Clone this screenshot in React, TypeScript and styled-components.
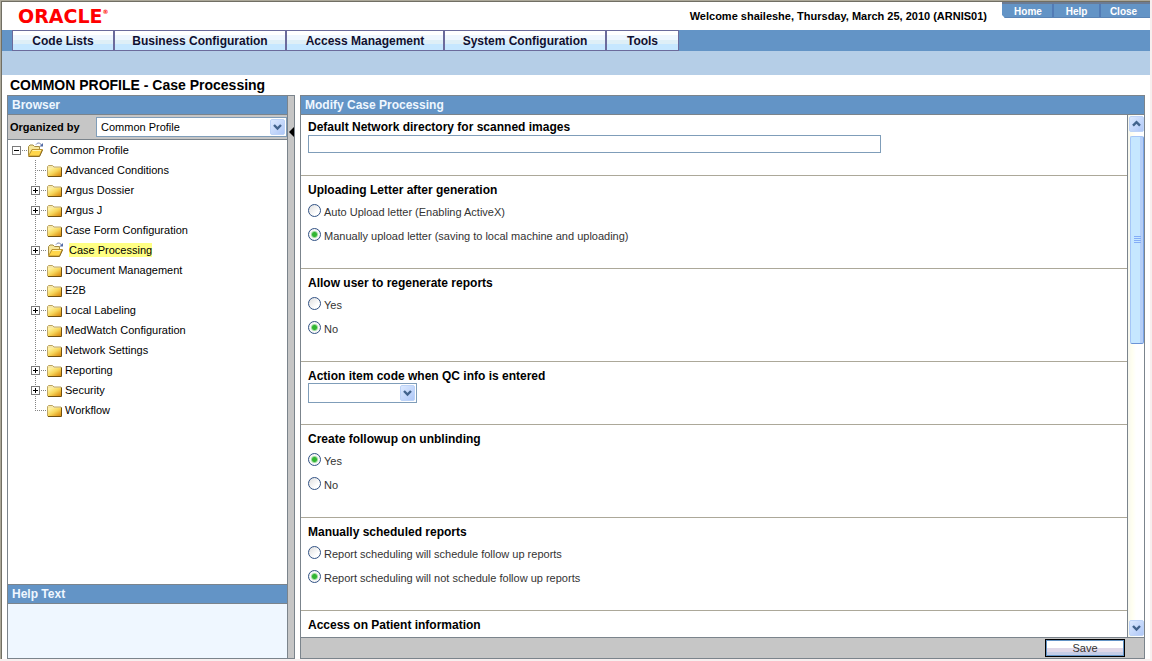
import React from "react";
import styled, { createGlobalStyle, css } from "styled-components";

const blue = "#6394c6";
const line = "#7b848c";
const grey = "#c6c6c6";
const field = "#7f9db9";

const GlobalStyle = createGlobalStyle`
  *, *::before, *::after { box-sizing: border-box; }
  body {
    margin: 0;
    background: #f7efef;
    color: #000;
    font-family: "Liberation Sans", Arial, sans-serif;
    font-size: 11px;
  }
  ul { list-style: none; margin: 0; padding: 0; }
  h1, h2, p { margin: 0; }
  button, input, select { font: inherit; color: inherit; }
`;

const Page = styled.div`
  display: flex;
  flex-direction: column;
  height: 100vh;
  min-height: 400px;
  padding: 0 2px 2px 0;
`;

const Frame = styled.div`
  flex: 1;
  min-height: 0;
  display: flex;
  flex-direction: column;
  background: #fff;
  border-style: solid;
  border-width: 1px 0 0 1px;
  border-color: #716f64;
  box-shadow: 0 0 0 1px #aca899;
  margin: 1px 0 0 1px;
  clip-path: inset(-1px 0 0 -1px);
`;

const Header = styled.header`
  display: flex;
  align-items: flex-start;
  height: 28px;
  padding-left: 16px;
`;

const Logo = styled.div`
  flex: 1;
  display: flex;
  align-items: flex-start;
  color: #f00;
  font-family: "DejaVu Sans", sans-serif;
  font-size: 19px;
  font-weight: bold;
  line-height: 28px;
`;

const Mark = styled.span`
  font-size: 6px;
  line-height: 20px;
`;

const Welcome = styled.p`
  font-weight: bold;
  line-height: 28px;
  margin-right: 15px;
`;

const QuickLinks = styled.nav`
  display: flex;
  height: 16px;
  background: ${blue};
  border-top: 2px solid #6b7b94;
  border-bottom: 1px solid #5a84b5;
  clip-path: polygon(0 0, 100% 0, 100% 100%, 3px 100%, 0 13px);
`;

const QuickLink = styled.a`
  display: block;
  min-width: 47px;
  padding: 0 4px;
  border-right: 2px solid #527bb5;
  color: #fff;
  font-size: 10px;
  font-weight: bold;
  line-height: 15px;
  text-align: center;
  text-decoration: none;
  &:first-child { min-width: 52px; padding-left: 6px; }
  &:last-child { min-width: 49px; padding-right: 8px; border-right: 0; }
`;

const TabBar = styled.nav`
  display: flex;
  height: 21px;
  padding-left: 10px;
  background: ${blue};
`;

const Tab = styled.a<{ $width: number }>`
  width: ${(p) => p.$width}px;
  border: 1px solid #6b6b9c;
  background: linear-gradient(#fff 4px, #eff7ff 4px 9px, #deeff7 9px 13px, #c6e7ff 13px);
  color: #101031;
  font-size: 12px;
  font-weight: bold;
  line-height: 20px;
  text-align: center;
  text-decoration: none;
`;

const SubBar = styled.div`
  height: 24px;
  background: #b5cee7;
`;

const Title = styled.h1`
  padding-left: 8px;
  font-size: 14px;
  line-height: 20px;
`;

const Columns = styled.main`
  flex: 1;
  min-height: 0;
  display: flex;
  padding: 0 5px 0 5px;
`;

const Side = styled.aside`
  flex: none;
  display: flex;
  flex-direction: column;
  width: 281px;
  border: 1px solid ${line};
`;

const PanelTitle = styled.h2`
  flex: none;
  height: 19px;
  padding-left: 4px;
  background: ${blue};
  border-bottom: 1px solid ${line};
  color: #eff7ff;
  font-size: 12px;
  line-height: 18px;
`;

const Organizer = styled.div`
  flex: none;
  display: flex;
  align-items: center;
  justify-content: space-between;
  height: 25px;
  padding-left: 2px;
  background: ${grey};
  border-bottom: 1px solid ${line};
  font-weight: bold;
`;

const SelectBox = styled.span<{ $width: number }>`
  position: relative;
  display: block;
  width: ${(p) => p.$width}px;
  height: 20px;
  svg {
    position: absolute;
    top: 2px;
    right: 2px;
    pointer-events: none;
  }
`;

const Select = styled.select`
  appearance: none;
  display: block;
  width: 100%;
  height: 20px;
  padding: 0 18px 0 4px;
  border: 1px solid ${field};
  border-radius: 0;
  background: #fff;
  font-weight: normal;
`;

const Tree = styled.ul`
  flex: 1;
  min-height: 0;
  overflow: hidden;
`;

const TreeRow = styled.div<{ $root?: boolean }>`
  display: flex;
  align-items: center;
  height: 20px;
  padding-left: ${(p) => (p.$root ? 4 : 23)}px;
  svg { flex: none; display: block; }
`;

const Toggle = styled.button`
  padding: 0;
  border: 0;
  background: none;
`;

const NodeLink = styled.a<{ $gap: number; $selected?: boolean }>`
  margin-left: ${(p) => p.$gap}px;
  line-height: 14px;
  color: #000;
  text-decoration: none;
  ${(p) => p.$selected && css`background: #ffff84;`}
`;

const Help = styled.section`
  flex: none;
  height: 74px;
  border-top: 1px solid ${line};
  background: #eff7ff;
`;

const Splitter = styled.button`
  flex: none;
  display: flex;
  width: 7px;
  padding: 31px 0 0;
  border: 1px solid ${line};
  border-left: 0;
  background: ${grey};
  svg { flex: none; display: block; }
`;

const Content = styled.section`
  flex: 1;
  min-width: 0;
  display: flex;
  flex-direction: column;
  margin-left: 5px;
  border: 1px solid ${line};
`;

const Viewport = styled.div`
  flex: 1;
  min-height: 0;
  display: flex;
`;

const Form = styled.form`
  flex: 1;
  min-width: 0;
  overflow-y: auto;
  scrollbar-width: none;
`;

const Group = styled.fieldset<{ $height: number; $first?: boolean }>`
  display: block;
  min-width: 0;
  height: ${(p) => p.$height}px;
  margin: 0;
  padding: ${(p) => (p.$first ? 5 : 7)}px 7px 0;
  border: 0;
  border-bottom: 1px solid #aca899;
`;

const caption = css`
  display: block;
  font-size: 12px;
  font-weight: bold;
  line-height: 14px;
`;

const Caption = styled.label`
  ${caption}
`;

const Legend = styled.legend`
  ${caption}
  float: left;
  width: 100%;
  padding: 0;
`;

const TextInput = styled.input`
  display: block;
  width: 573px;
  max-width: 100%;
  height: 18px;
  margin-top: 1px;
  padding: 0 3px;
  border: 1px solid ${field};
`;

const Options = styled.div`
  clear: both;
  padding-top: 2px;
`;

const Option = styled.label`
  display: flex;
  align-items: center;
  gap: 3px;
  height: 24px;
  padding-top: 2px;
  color: #333;
`;

const Radio = styled.input`
  appearance: none;
  flex: none;
  width: 13px;
  height: 13px;
  margin: 0 0 4px;
  border: 1px solid #315284;
  border-radius: 50%;
  background: linear-gradient(135deg, #dedede, #fff 70%);
  &:checked {
    background: radial-gradient(circle, #31b531 2px, #9cdb9c 3px, #f7f7f7 4px);
  }
`;

const ScrollBar = styled.div`
  flex: none;
  display: flex;
  flex-direction: column;
  width: 17px;
  border-left: 1px solid ${line};
  background: linear-gradient(90deg, #f7f7ef, #fffff0 4px, #fff 8px);
  svg { display: block; }
`;

const ScrollButton = styled.button`
  display: block;
  height: 18px;
  padding: 1px 0 1px 1px;
  border: 0;
  background: none;
`;

const Thumb = styled.div`
  display: flex;
  align-items: center;
  justify-content: center;
  height: 208px;
  margin: 3px 0 auto 2px;
  border: 1px solid #a5c6f7;
  border-right: 1px solid #7ba5e7;
  border-bottom: 1px solid #6b94d6;
  border-radius: 2px;
  background: linear-gradient(90deg, #c6e7ff 9px, #b5cef7 9px);
`;

const Footer = styled.footer`
  flex: none;
  display: flex;
  justify-content: flex-end;
  align-items: center;
  height: 21px;
  padding-right: 19px;
  border-top: 1px solid ${line};
  background: ${grey};
`;

const SaveButton = styled.button`
  width: 80px;
  height: 18px;
  padding: 0;
  border: 1px solid #000;
  background: linear-gradient(#fff 8px, #e0d8e8 8px 12px, #c6cee7 12px);
  box-shadow: inset 0 0 0 1px ${blue};
  line-height: 16px;
  color: #333;
`;

const Chevron = ({ up = false }: { up?: boolean }) => (
  <svg width="15" height="16" viewBox="0 0 15 16">
    <defs>
      <linearGradient id="btn" x1="0" y1="0" x2="1" y2="1">
        <stop offset="0" stopColor="#deebff" />
        <stop offset="1" stopColor="#adc6f7" />
      </linearGradient>
    </defs>
    <rect x=".5" y=".5" width="14" height="15" rx="1.5" fill="url(#btn)" stroke="#bdd3f7" />
    <path
      d={up ? "M4 9.700 7.500 6.200 11 9.700" : "M4 6 7.500 9.500 11 6"}
      fill="none"
      stroke="#42638c"
      strokeWidth="2.4"
    />
  </svg>
);

const Folder = () => (
  <svg width="15" height="13" viewBox="0 0 15 13">
    <defs>
      <linearGradient id="gold" x1="0" y1="0" x2="1" y2="1">
        <stop offset="0.1" stopColor="#fff3a5" />
        <stop offset="0.5" stopColor="#f7d65a" />
        <stop offset="0.9" stopColor="#de9418" />
      </linearGradient>
    </defs>
    <path d="M.5 12V2.500L1.500 1.500h4L7 3h7V12z" fill="#f7e7a5" stroke="#bda563" />
    <path d="M1 4h13v8H1z" fill="url(#gold)" />
    <path d="M14.500 3.500v9H1" fill="none" stroke="#735210" />
  </svg>
);

const OpenFolder = () => (
  <svg width="17" height="16" viewBox="0 0 17 16">
    <path d="M1.500 13.500v-9L3 3h3l1.500 1.500h5V8" fill="#f7e79c" stroke="#a58c42" />
    <path d="M1.500 14 5 7.500h10.500L12.500 14z" fill="#ffd64a" stroke="#bd9431" />
    <path d="M5.500 8.500h8.500" stroke="#fff3ad" />
    <path d="M1.500 14.500h11L15.500 8" fill="none" stroke="#8c6b21" />
    <path d="M9 2.500C10.500.5 13 .5 14.500 3" fill="none" stroke="#6b7bad" />
    <path d="M12.500 4.500h3.500V1z" fill="#526ba5" />
  </svg>
);

type Expander = "plus" | "minus" | "none";

const Box = ({ kind }: { kind: Expander }) => (
  <>
    <rect x="0.5" y="6.5" width="8" height="8" fill="#fff" stroke="#7b7b7b" />
    <path d={kind === "plus" ? "M2 10.500h5M4.500 8v5" : "M2 10.500h5"} stroke="#000" />
  </>
);

const Branch = ({ kind, last }: { kind: Expander; last: boolean }) => (
  <svg width="16" height="20" viewBox="0 0 16 20">
    <path
      d={`M4.500 0v${last ? 11 : 20}M6 10.500h10`}
      stroke="#848484"
      strokeDasharray="1 1"
    />
    {kind !== "none" && <Box kind={kind} />}
  </svg>
);

const nodes: { name: string; open?: boolean; more?: boolean }[] = [
  { name: "Advanced Conditions" },
  { name: "Argus Dossier", more: true },
  { name: "Argus J", more: true },
  { name: "Case Form Configuration" },
  { name: "Case Processing", more: true, open: true },
  { name: "Document Management" },
  { name: "E2B" },
  { name: "Local Labeling", more: true },
  { name: "MedWatch Configuration" },
  { name: "Network Settings" },
  { name: "Reporting", more: true },
  { name: "Security", more: true },
  { name: "Workflow" },
];

const tabs: [string, number][] = [
  ["Code Lists", 102],
  ["Business Configuration", 172],
  ["Access Management", 158],
  ["System Configuration", 162],
  ["Tools", 73],
];

const RadioGroup = ({
  name,
  title,
  options,
  selected,
}: {
  name: string;
  title: string;
  options: string[];
  selected: number;
}) => (
  <Group $height={93}>
    <Legend>{title}</Legend>
    <Options>
      {options.map((text, i) => (
        <Option key={text}>
          <Radio type="radio" name={name} defaultChecked={i === selected} />
          {text}
        </Option>
      ))}
    </Options>
  </Group>
);

export default function App() {
  return (
    <Page>
      <GlobalStyle />
      <Frame>
        <Header>
          <Logo>
            ORACLE<Mark>®</Mark>
          </Logo>
          <Welcome>Welcome shaileshe, Thursday, March 25, 2010 (ARNIS01)</Welcome>
          <QuickLinks>
            <QuickLink href="#home">Home</QuickLink>
            <QuickLink href="#help">Help</QuickLink>
            <QuickLink href="#close">Close</QuickLink>
          </QuickLinks>
        </Header>
        <TabBar>
          {tabs.map(([label, width]) => (
            <Tab key={label} href="#tab" $width={width}>
              {label}
            </Tab>
          ))}
        </TabBar>
        <SubBar />
        <Title>COMMON PROFILE - Case Processing</Title>
        <Columns>
          <Side>
            <PanelTitle>Browser</PanelTitle>
            <Organizer>
              <label htmlFor="organize">Organized by</label>
              <SelectBox $width={191}>
                <Select id="organize">
                  <option>Common Profile</option>
                </Select>
                <Chevron />
              </SelectBox>
            </Organizer>
            <Tree>
              <li>
                <TreeRow $root>
                  <Toggle type="button" aria-label="Collapse Common Profile">
                    <svg width="15" height="20" viewBox="0 0 15 20">
                      <path d="M10 10.500h5" stroke="#848484" strokeDasharray="1 1" />
                      <Box kind="minus" />
                    </svg>
                  </Toggle>
                  <OpenFolder />
                  <NodeLink href="#node" $gap={6}>
                    Common Profile
                  </NodeLink>
                </TreeRow>
                <ul>
                  {nodes.map((n, i) => {
                    const branch = (
                      <Branch kind={n.more ? "plus" : "none"} last={i === nodes.length - 1} />
                    );
                    return (
                      <li key={n.name}>
                        <TreeRow>
                          {n.more ? (
                            <Toggle type="button" aria-label={`Expand ${n.name}`}>
                              {branch}
                            </Toggle>
                          ) : (
                            branch
                          )}
                          {n.open ? <OpenFolder /> : <Folder />}
                          <NodeLink href="#node" $gap={n.open ? 5 : 3} $selected={n.open}>
                            {n.name}
                          </NodeLink>
                        </TreeRow>
                      </li>
                    );
                  })}
                </ul>
              </li>
            </Tree>
            <Help>
              <PanelTitle>Help Text</PanelTitle>
            </Help>
          </Side>
          <Splitter type="button" aria-label="Hide browser">
            <svg width="6" height="10" viewBox="0 0 6 10">
              <path d="M6 0v10L1 5z" fill="#000" />
            </svg>
          </Splitter>
          <Content>
            <PanelTitle>Modify Case Processing</PanelTitle>
            <Viewport>
              <Form>
                <Group $height={61} $first>
                  <Caption htmlFor="scan-dir">Default Network directory for scanned images</Caption>
                  <TextInput id="scan-dir" type="text" />
                </Group>
                <RadioGroup
                  name="upload"
                  title="Uploading Letter after generation"
                  options={[
                    "Auto Upload letter (Enabling ActiveX)",
                    "Manually upload letter (saving to local machine and uploading)",
                  ]}
                  selected={1}
                />
                <RadioGroup
                  name="regenerate"
                  title="Allow user to regenerate reports"
                  options={["Yes", "No"]}
                  selected={1}
                />
                <Group $height={63}>
                  <Caption htmlFor="qc-code">Action item code when QC info is entered</Caption>
                  <SelectBox $width={109}>
                    <Select id="qc-code" />
                    <Chevron />
                  </SelectBox>
                </Group>
                <RadioGroup
                  name="followup"
                  title="Create followup on unblinding"
                  options={["Yes", "No"]}
                  selected={0}
                />
                <RadioGroup
                  name="scheduled"
                  title="Manually scheduled reports"
                  options={[
                    "Report scheduling will schedule follow up reports",
                    "Report scheduling will not schedule follow up reports",
                  ]}
                  selected={1}
                />
                <Group $height={93}>
                  <Legend>Access on Patient information</Legend>
                </Group>
              </Form>
              <ScrollBar>
                <ScrollButton type="button" aria-label="Scroll up">
                  <Chevron up />
                </ScrollButton>
                <Thumb>
                  <svg width="7" height="8" viewBox="0 0 7 8">
                    <path d="M0 .5h7M0 2.500h7M0 4.500h7M0 6.500h7" stroke="#84adf7" />
                  </svg>
                </Thumb>
                <ScrollButton type="button" aria-label="Scroll down">
                  <Chevron />
                </ScrollButton>
              </ScrollBar>
            </Viewport>
            <Footer>
              <SaveButton type="button">Save</SaveButton>
            </Footer>
          </Content>
        </Columns>
      </Frame>
    </Page>
  );
}
